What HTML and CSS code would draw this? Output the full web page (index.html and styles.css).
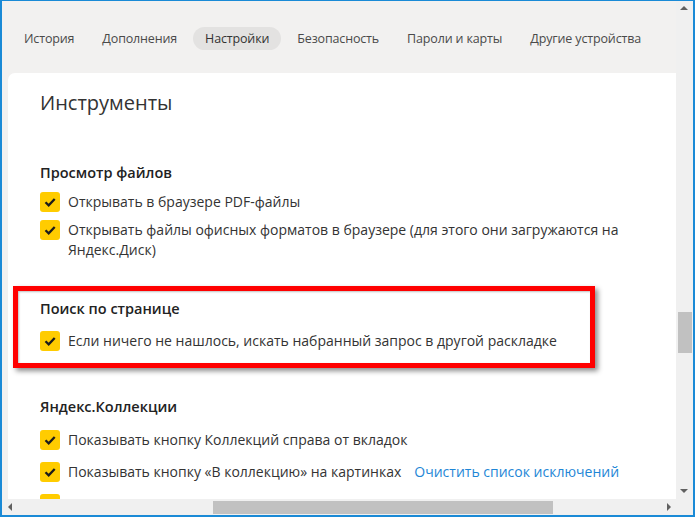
FILE: index.html
```html
<!DOCTYPE html>
<html lang="ru">
<head>
    <meta charset="UTF-8">
    <title>Настройки</title>
    <link rel="stylesheet" href="styles.css">
</head>
<body>
    <div class="window">
        <div class="viewport">
            <nav class="tabs">
                <a class="tab">История</a>
                <a class="tab">Дополнения</a>
                <a class="tab active">Настройки</a>
                <a class="tab">Безопасность</a>
                <a class="tab">Пароли и карты</a>
                <a class="tab">Другие устройства</a>
            </nav>

            <main class="card">
                <h1>Инструменты</h1>

                <section class="group files">
                    <h2>Просмотр файлов</h2>
                    <label class="option">
                        <span class="check"><svg viewBox="0 0 20 20"><path d="M5.5 10.2l3.2 3.2 6-6.4"/></svg></span>
                        <span class="text">Открывать в браузере PDF-файлы</span>
                    </label>
                    <label class="option">
                        <span class="check"><svg viewBox="0 0 20 20"><path d="M5.5 10.2l3.2 3.2 6-6.4"/></svg></span>
                        <span class="text">Открывать файлы офисных форматов в браузере (для этого они загружаются на Яндекс.Диск)</span>
                    </label>
                </section>

                <section class="group search highlight">
                    <h2>Поиск по странице</h2>
                    <label class="option">
                        <span class="check"><svg viewBox="0 0 20 20"><path d="M5.5 10.2l3.2 3.2 6-6.4"/></svg></span>
                        <span class="text">Если ничего не нашлось, искать набранный запрос в другой раскладке</span>
                    </label>
                </section>

                <section class="group collections">
                    <h2>Яндекс.Коллекции</h2>
                    <label class="option">
                        <span class="check"><svg viewBox="0 0 20 20"><path d="M5.5 10.2l3.2 3.2 6-6.4"/></svg></span>
                        <span class="text">Показывать кнопку Коллекций справа от вкладок</span>
                    </label>
                    <label class="option">
                        <span class="check"><svg viewBox="0 0 20 20"><path d="M5.5 10.2l3.2 3.2 6-6.4"/></svg></span>
                        <span class="text">Показывать кнопку «В коллекцию» на картинках</span>
                        <a class="link">Очистить список исключений</a>
                    </label>
                    <label class="option">
                        <span class="check"><svg viewBox="0 0 20 20"><path d="M5.5 10.2l3.2 3.2 6-6.4"/></svg></span>
                        <span class="text">Показывать кнопку «В коллекцию» при выделении текста</span>
                    </label>
                </section>
            </main>
        </div>

        <div class="vscroll">
            <span class="arrow up"></span>
            <div class="track"><div class="thumb"></div></div>
            <span class="arrow down"></span>
        </div>
        <div class="hscroll">
            <span class="arrow left"></span>
            <div class="track"><div class="thumb"></div></div>
            <span class="arrow right"></span>
        </div>
        <div class="corner"></div>
    </div>
</body>
</html>
```

FILE: styles.css
```css
* {
    margin: 0;
    padding: 0;
    box-sizing: border-box;
}

body {
    width: 695px;
    height: 517px;
    overflow: hidden;
    font-family: 'Open Sans', 'Noto Sans', sans-serif;
    color: #333;
}

.window {
    width: 695px;
    height: 517px;
    border: 2px solid #1a8ad6;
    border-top-width: 1px;
    display: grid;
    grid-template-columns: 1fr 17px;
    grid-template-rows: 1fr 16px;
    background: #f2f1f0;
}

.viewport {
    overflow: hidden;
    background: #f2f1f0;
}

/* tabs */

.tabs {
    display: flex;
    gap: 4px;
    height: 72px;
    padding: 26px 0 0 10px;
    white-space: nowrap;
}

.tab {
    height: 23px;
    line-height: 23px;
    padding: 0 12px;
    border-radius: 12px;
    font-size: 12.5px;
    letter-spacing: -0.15px;
    color: #4a4a4a;
}

.tab.active {
    background: #e3e2e1;
    color: #333;
}

/* card */

.card {
    margin-left: 6px;
    height: 500px;
    background: #fff;
    border-radius: 7px 0 0 0;
    padding: 16px 0 0 32px;
}

h1 {
    font-size: 20px;
    font-weight: 400;
    line-height: 28px;
    color: #333;
}

h2 {
    font-size: 14.5px;
    font-weight: 600;
    line-height: 20px;
    color: #222;
}

.group {
    display: flex;
    flex-direction: column;
}

.files {
    margin-top: 46px;
    gap: 8px;
}

.search {
    margin-top: 39px;
    gap: 11px;
    width: 560px;
}

.collections {
    margin-top: 46px;
    gap: 12px;
}

.group h2 {
    margin-bottom: 1px;
}

.option {
    display: flex;
    align-items: flex-start;
    gap: 8px;
    font-size: 14px;
    line-height: 20px;
    white-space: nowrap;
}

.option .text {
    white-space: normal;
    max-width: 570px;
}

.check {
    flex: none;
    width: 20px;
    height: 20px;
    background: #ffcc00;
    border-radius: 3px;
}

.check svg {
    display: block;
    width: 20px;
    height: 20px;
}

.check path {
    fill: none;
    stroke: #1b1b1b;
    stroke-width: 2.3;
}

.link {
    margin-left: 5px;
    color: #1e86d6;
}

/* the red frame drawn over the search section */

.highlight {
    position: relative;
}

.highlight::after {
    content: '';
    box-sizing: border-box;
    position: absolute;
    left: -27px;
    top: -13px;
    width: 582px;
    height: 82px;
    border: 5px solid #ff0000;
    box-shadow: 3px 3px 5px rgba(0, 0, 0, 0.45), inset 1px 1px 2px rgba(0, 0, 0, 0.25);
}

/* scrollbars */

.vscroll {
    display: flex;
    flex-direction: column;
    background: #f0f0f0;
}

.vscroll .track {
    flex: 1;
    padding: 294px 1px 0 2px;
}

.vscroll .thumb {
    height: 41px;
    background: #c1c1c1;
}

.hscroll {
    display: flex;
    background: #f0f0f0;
}

.hscroll .track {
    flex: 1;
    padding: 2px 0 1px 194px;
}

.hscroll .thumb {
    width: 340px;
    height: 100%;
    background: #c1c1c1;
}

.corner {
    background: #f0f0f0;
}

.arrow {
    flex: none;
    width: 17px;
    height: 17px;
    position: relative;
}

.hscroll .arrow {
    height: 16px;
}

.arrow::before {
    content: '';
    position: absolute;
    width: 0;
    height: 0;
    border: 4px solid transparent;
}

.arrow.up::before {
    left: 4px;
    top: 1px;
    border-bottom-color: #606060;
}

.arrow.down::before {
    left: 4px;
    top: 7px;
    border-top-color: #606060;
}

.arrow.left::before {
    left: 2px;
    top: 4px;
    border-right-color: #606060;
}

.arrow.right::before {
    left: 8px;
    top: 4px;
    border-left-color: #606060;
}
```
